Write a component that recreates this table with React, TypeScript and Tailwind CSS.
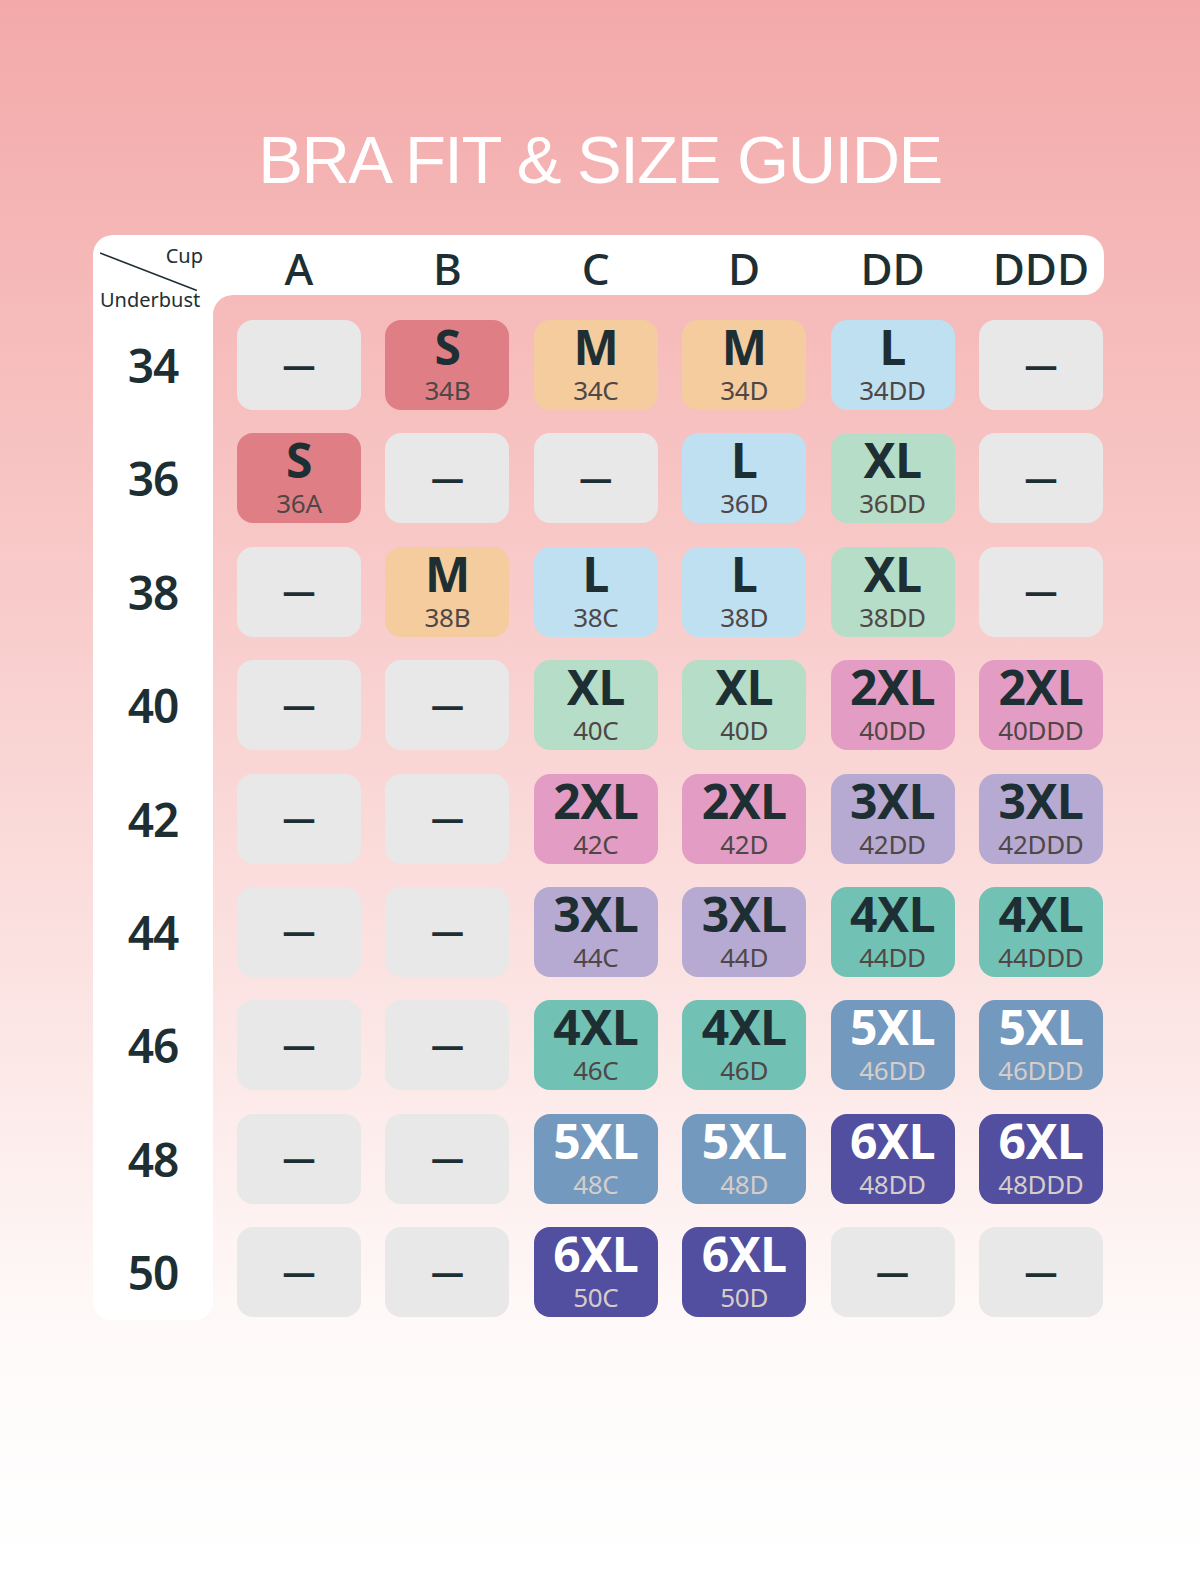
import React from "react";

const STY: Record<string, { cls: string; light?: boolean }> = {
  S: { cls: "bg-[#e07e85]" },
  M: { cls: "bg-[#f5cc9e]" },
  L: { cls: "bg-[#bee0f1]" },
  XL: { cls: "bg-[#b5ddc8]" },
  "2XL": { cls: "bg-[#e39dc4]" },
  "3XL": { cls: "bg-[#b6aad2]" },
  "4XL": { cls: "bg-[#72c1b5]" },
  "5XL": { cls: "bg-[#7399bf]", light: true },
  "6XL": { cls: "bg-[#524ea0]", light: true },
};

const CUPS = ["A", "B", "C", "D", "DD", "DDD"];

const ROWS: [number, (string | null)[]][] = [
  [34, [null, "S", "M", "M", "L", null]],
  [36, ["S", null, null, "L", "XL", null]],
  [38, [null, "M", "L", "L", "XL", null]],
  [40, [null, null, "XL", "XL", "2XL", "2XL"]],
  [42, [null, null, "2XL", "2XL", "3XL", "3XL"]],
  [44, [null, null, "3XL", "3XL", "4XL", "4XL"]],
  [46, [null, null, "4XL", "4XL", "5XL", "5XL"]],
  [48, [null, null, "5XL", "5XL", "6XL", "6XL"]],
  [50, [null, null, "6XL", "6XL", null, null]],
];

const FONT = "font-['Noto_Sans',sans-serif]";

function SizeCell({ size, label }: { size: string | null; label: string }) {
  if (!size) {
    return (
      <div className="h-[90px] rounded-[16px] bg-[#e8e8e8] flex items-center justify-center">
        <span className="text-[33px] font-bold leading-none text-[#1e2f33] pb-[2px]">—</span>
      </div>
    );
  }
  const s = STY[size];
  return (
    <div className={`h-[90px] rounded-[16px] ${s.cls} flex flex-col items-center pt-[5px]`}>
      <span
        className={`text-[48px] font-bold leading-[44px] tracking-[-0.5px] ${
          s.light ? "text-white" : "text-[#1e2f33]"
        }`}
      >
        {size}
      </span>
      <span
        className={`mt-[8px] text-[26px] leading-[26px] tracking-[-0.3px] ${
          s.light ? "text-[#d6cdc9]" : "text-[#4f4745]"
        }`}
      >
        {label}
      </span>
    </div>
  );
}

export default function App() {
  return (
    <div
      className={`w-[1200px] h-[1574px] bg-[linear-gradient(180deg,#f3a9a9_0%,#f7c4c3_30%,#fbe3e2_62%,#fefaf9_85%,#ffffff_100%)] ${FONT} flex flex-col items-center`}
    >
      <h1 className="mt-[125px] text-[67px] leading-[70px] tracking-[-1.5px] text-white font-['Liberation_Sans',Arial,sans-serif] font-normal">
        BRA FIT &amp; SIZE GUIDE
      </h1>

      <div className="mt-[40px] w-[1011px] ml-[-3px]">
        {/* header row */}
        <div className="h-[60px] bg-white rounded-tl-[20px] rounded-tr-[20px] rounded-br-[20px] flex">
          <div className="relative w-[120px] h-[60px] shrink-0">
            <svg className="absolute left-[7px] top-[17px]" width="110" height="46" viewBox="0 0 110 46">
              <line x1="0" y1="1" x2="106" y2="42" stroke="#1e2f33" strokeWidth="1.6" />
            </svg>
            <span className="absolute right-[10px] top-[9px] text-[20px] leading-[24px] text-[#1e2f33]">Cup</span>
            <span className="absolute left-[7px] top-[53px] text-[20px] leading-[24px] text-[#1e2f33] z-10">
              Underbust
            </span>
          </div>
          <div className="pl-[24px] grid grid-cols-[repeat(6,124px)] gap-x-[24.4px] items-center">
            {CUPS.map((c) => (
              <div key={c} className="text-center text-[44px] leading-none font-medium text-[#1e2f33] pt-[6px]">
                {c}
              </div>
            ))}
          </div>
        </div>

        {/* body */}
        <div className="flex">
          <div className="w-[120px] shrink-0 bg-white rounded-bl-[18px] rounded-br-[18px] pt-[25px] pb-[3px] flex flex-col gap-[23.4px]">
            {ROWS.map(([n]) => (
              <div key={n} className="h-[90px] flex items-center justify-center text-[46px] font-semibold leading-none text-[#1e2f33] tracking-[-1px]">
                {n}
              </div>
            ))}
          </div>
          <div className="relative flex-1 pl-[24px] pt-[25px]">
            <div className="absolute left-0 top-0 w-[20px] h-[20px] rounded-tl-[20px] shadow-[-10px_-10px_0_10px_#ffffff]" />
            <div className="grid grid-cols-[repeat(6,124px)] gap-x-[24.4px] gap-y-[23.4px]">
              {ROWS.map(([n, cells]) =>
                cells.map((sz, i) => (
                  <SizeCell key={`${n}-${i}`} size={sz} label={`${n}${CUPS[i]}`} />
                ))
              )}
            </div>
          </div>
        </div>
      </div>
    </div>
  );
}
